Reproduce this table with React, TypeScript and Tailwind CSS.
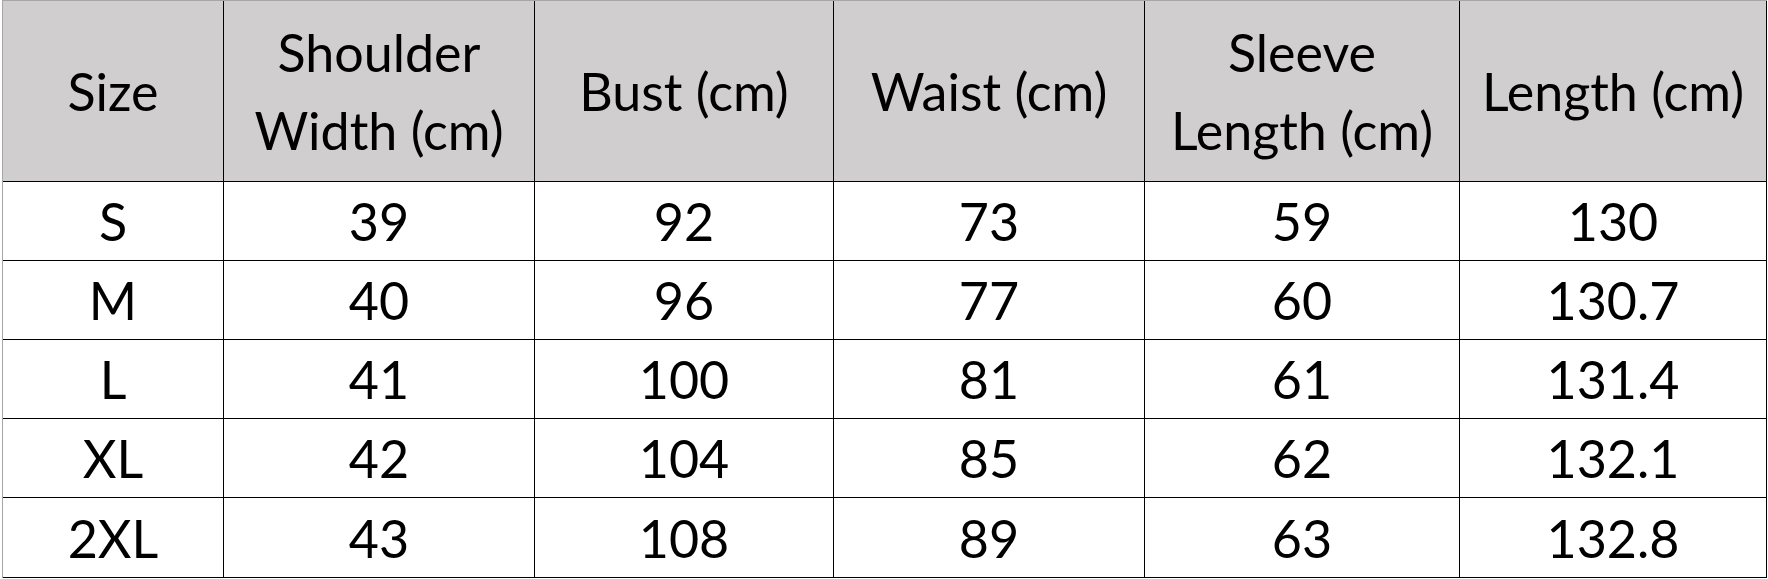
const columns = [
  { label: ["Size"], width: "w-[221px]" },
  { label: ["Shoulder", "Width (cm)"], width: "w-[311px]" },
  { label: ["Bust (cm)"], width: "w-[299px]" },
  { label: ["Waist (cm)"], width: "w-[311px]" },
  { label: ["Sleeve", "Length (cm)"], width: "w-[315px]" },
  { label: ["Length (cm)"], width: "w-[307px]" },
];

const rows = [
  ["S", "39", "92", "73", "59", "130"],
  ["M", "40", "96", "77", "60", "130.7"],
  ["L", "41", "100", "81", "61", "131.4"],
  ["XL", "42", "104", "85", "62", "132.1"],
  ["2XL", "43", "108", "89", "63", "132.8"],
];

const rowHeights = ["h-[79px]", "h-[79px]", "h-[79px]", "h-[79px]", "h-[80px]"];

export default function App() {
  return (
    <div className="h-[579px] w-[1768px] overflow-hidden bg-white font-['Lato',sans-serif] text-[52px] text-black">
      <div className="ml-[2px] inline-flex flex-col border-l border-t border-[#a6a6a6]">
        <div className="flex h-[181px] bg-[#d0cece]">
          {columns.map((col) => (
            <div
              key={col.label.join(" ")}
              className={`${col.width} flex shrink-0 flex-col items-center justify-center border-b border-r border-black leading-[78px] whitespace-nowrap`}
            >
              {col.label.map((line) => (
                <span key={line}>{line}</span>
              ))}
            </div>
          ))}
        </div>
        {rows.map((row, i) => (
          <div key={row[0]} className={`flex ${rowHeights[i]}`}>
            {row.map((value, j) => (
              <div
                key={j}
                className={`${columns[j].width} flex shrink-0 items-center justify-center border-b border-r border-black leading-none`}
              >
                {value}
              </div>
            ))}
          </div>
        ))}
      </div>
    </div>
  );
}
